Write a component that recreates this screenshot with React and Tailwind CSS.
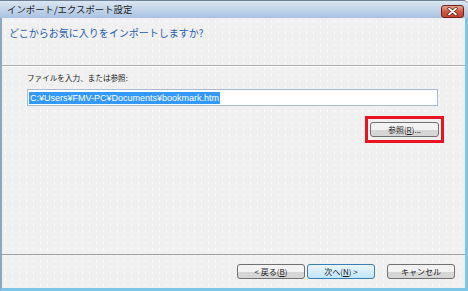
import React from "react";

const dots =
  "bg-[#f0f0f0] bg-[radial-gradient(circle,rgba(255,255,255,0.8)_0.5px,transparent_0.8px)] bg-[length:7px_6px]";

function App() {
  return (
    <div className="w-[468px] h-[291px] flex flex-col overflow-hidden bg-[#f0f0f0] font-['Noto_Sans_CJK_JP',sans-serif] text-[#1a1a1a]">
      {/* title bar */}
      <TitleBar />

      {/* dialog body */}
      <div className="flex-1 flex flex-col border-l-2 border-r-[3px] border-b-[3px] border-l-[#8fa6bf] border-r-[#7ec6e8] border-b-[#7ec6e8]">
        <div className={"flex-1 flex flex-col " + dots}>
          <Header />
          <Main />
          <Footer />
        </div>
      </div>
    </div>
  );
}

function TitleBar() {
  return (
    <div className="h-[18px] flex items-center justify-between border-t border-[#6f8297] rounded-tr-[5px] bg-gradient-to-b from-[#dbe6f2] to-[#a9c2e1] pl-[7px] pr-[4px]">
      <p className="text-[9.4px] leading-none text-[#1c1c1c]">インポート/エクスポート設定</p>
      <div className="w-[23px] h-[13px] mt-[3px] rounded-[3px] border border-[#6e2218] bg-gradient-to-b from-[#e8a592] via-[#cf5a44] to-[#c4412c] flex items-center justify-center">
        <svg width="11" height="9" viewBox="0 0 11 9">
          <path d="M2 1.5 L9 7.5 M9 1.5 L2 7.5" stroke="#5a1a12" strokeWidth="3.2" strokeLinecap="round" />
          <path d="M2 1.5 L9 7.5 M9 1.5 L2 7.5" stroke="#ffffff" strokeWidth="1.8" strokeLinecap="round" />
        </svg>
      </div>
    </div>
  );
}

function Header() {
  return (
    <>
      <div className="h-[47px] pl-[7px] pt-[8px]">
        <p className="text-[10px] leading-[14px] text-[#1f5fb0]">どこからお気に入りをインポートしますか?</p>
      </div>
      <div className="h-px bg-[#b0b0b0]" />
      <div className="h-px bg-white/70" />
    </>
  );
}

function Main() {
  return (
    <div className="flex-1 flex flex-col pl-[25px] pr-[27px] pt-[5px]">
      <p className="text-[7.6px] leading-[12px]">ファイルを入力、または参照:</p>
      <div className="mt-[5px] h-[17px] flex items-center bg-white border border-[#abbcd2] pl-[1px]">
        <span className="bg-[#3399ff] text-white font-['Liberation_Sans',sans-serif] text-[9px] leading-[12px] px-px">
          C:¥Users¥FMV-PC¥Documents¥bookmark.htm
        </span>
      </div>
      <div className="mt-[10px] flex justify-end -mr-[6px]">
        <div className="border-[3px] border-[#e81421] px-[2px] py-[3px]">
          <Button className="w-[69px]">
            参照(<span className="underline">R</span>)...
          </Button>
        </div>
      </div>
    </div>
  );
}

function Footer() {
  return (
    <>
      <div className="h-px bg-[#a0a0a0]" />
      <div className="h-[33px] flex justify-end items-start pt-[9px] pr-[10px]">
        <Button className="w-[68px]">
          &lt; 戻る(<span className="underline">B</span>)
        </Button>
        <Button primary className="w-[68px] ml-[2px]">
          次へ(<span className="underline">N</span>) &gt;
        </Button>
        <Button className="w-[68px] ml-[12px]">キャンセル</Button>
      </div>
    </>
  );
}

function Button({ children, className = "", primary = false }) {
  return (
    <div
      className={
        "h-[15px] flex items-center justify-center rounded-[3px] border text-[8px] leading-none " +
        (primary
          ? "border-[#3c7fb1] bg-gradient-to-b from-[#eaf6fd] to-[#bee6fd] "
          : "border-[#707070] bg-gradient-to-b from-[#f2f2f2] from-50% to-[#d6d6d6] to-50% ") +
        className
      }
    >
      <span>{children}</span>
    </div>
  );
}

export default App;
